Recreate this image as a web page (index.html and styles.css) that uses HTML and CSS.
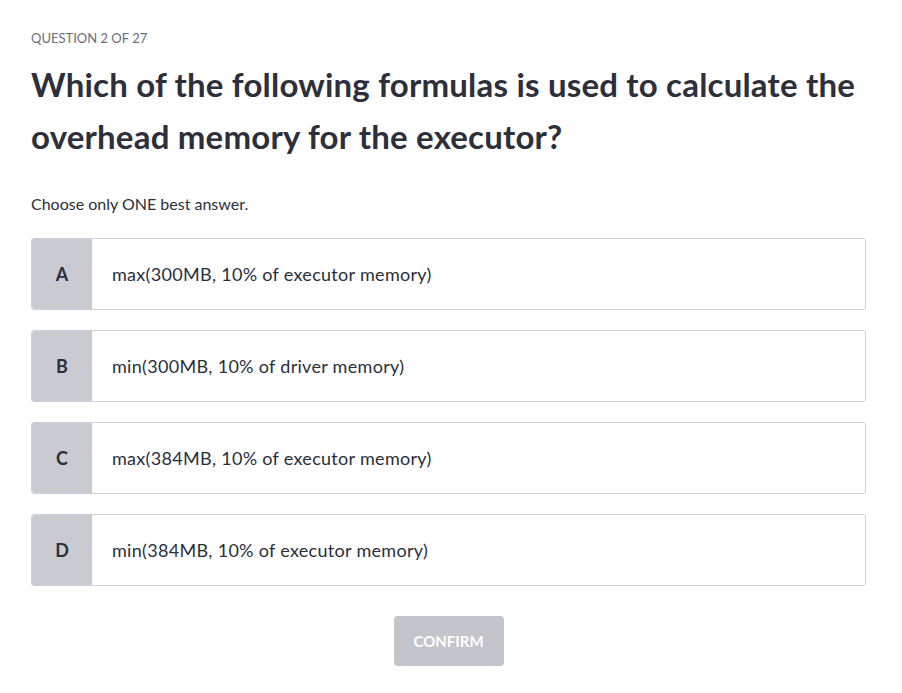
FILE: index.html
```html
<!DOCTYPE html>
<html>
<head>
<meta charset="utf-8">
<link rel="stylesheet" href="styles.css">
</head>
<body>
<main class="quiz">
  <div class="counter">QUESTION 2 OF 27</div>
  <h1 class="question">Which of the following formulas is used to calculate the overhead memory for the executor?</h1>
  <p class="hint">Choose only ONE best answer.</p>
  <div class="options">
    <div class="option"><div class="letter">A</div><div class="text">max(300MB, 10% of executor memory)</div></div>
    <div class="option"><div class="letter">B</div><div class="text">min(300MB, 10% of driver memory)</div></div>
    <div class="option"><div class="letter">C</div><div class="text">max(384MB, 10% of executor memory)</div></div>
    <div class="option"><div class="letter">D</div><div class="text">min(384MB, 10% of executor memory)</div></div>
  </div>
  <div class="actions"><button class="confirm" disabled>CONFIRM</button></div>
</main>
</body>
</html>
```
FILE: styles.css
```css
html, body { margin: 0; padding: 0; background: #fff; }
body { font-family: Lato, "Noto Sans", sans-serif; color: #29303b; }
.quiz { width: 835px; padding: 30px 0 0 31px; }
.counter { font-size: 13px; color: #686f7a; line-height: 16px; }
.question { font-size: 33px; letter-spacing: 0.2px; font-weight: 700; line-height: 52px; margin: 12px 0 0; color: #2d2f3b; }
.hint { font-size: 16px; margin: 32px 0 0; line-height: 20px; color: #29303b; }
.options { display: flex; flex-direction: column; gap: 20px; margin-top: 24px; }
.option { display: flex; height: 72px; border: 1px solid #d0d1d6; border-radius: 3px; overflow: hidden; box-sizing: border-box; }
.letter { width: 60px; background: #cacbd2; display: flex; align-items: center; justify-content: center; font-weight: 700; font-size: 18px; color: #29303b; }
.text { display: flex; align-items: center; padding-left: 20px; font-size: 18px; letter-spacing: 0.3px; color: #29303b; }
.actions { display: flex; justify-content: center; margin-top: 30px; }
.confirm { width: 110px; height: 50px; border: none; border-radius: 4px; background: #c4c5ca; color: #fff; font-family: Lato, sans-serif; font-weight: 700; font-size: 15px; }
```
